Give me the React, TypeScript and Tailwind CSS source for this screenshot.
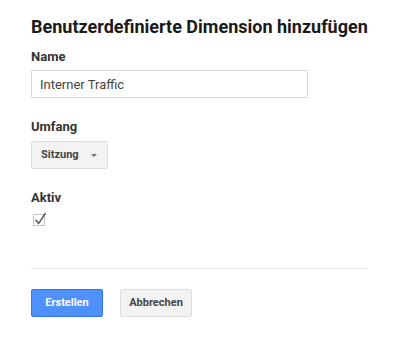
import React, { useState } from 'react';

export default function App() {
  const [name, setName] = useState('Interner Traffic');
  const [active, setActive] = useState(true);

  return (
    <div className="min-h-screen bg-white pl-[31px] pr-[27px] pt-[15px] text-[#222]" style={{ fontFamily: 'Roboto, Arial, sans-serif' }}>
      <h1 className="text-[18px] font-bold leading-[24px] text-[#1a1a1a]">Benutzerdefinierte Dimension hinzufügen</h1>

      <div className="mt-[10px]">
        <label className="block text-[13px] font-bold leading-[16px] text-[#333]">Name</label>
        <input
          value={name}
          onChange={(e) => setName(e.target.value)}
          className="mt-[5px] block h-[28px] w-[277px] border border-[#d9d9d9] px-[8px] text-[13px] text-[#444] outline-none"
        />
      </div>

      <div className="mt-[21px]">
        <label className="block text-[13px] font-bold leading-[16px] text-[#333]">Umfang</label>
        <button className="mt-[6px] flex h-[28px] w-[77px] items-center justify-between rounded-[2px] border border-[#dcdcdc] bg-[#f3f3f3] pl-[9px] pr-[10px] text-[11px] font-bold text-[#444]">
          <span>Sitzung</span>
          <span className="h-0 w-0 border-x-[3px] border-t-[3px] border-x-transparent border-t-[#777]" />
        </button>
      </div>

      <div className="mt-[21px]">
        <label className="block text-[13px] font-bold leading-[16px] text-[#333]">Aktiv</label>
        <button
          onClick={() => setActive(!active)}
          className="relative mt-[8px] ml-[2px] block h-[12px] w-[12px] border border-[#c4c4c4] bg-white"
        >
          {active && (
            <svg width="15" height="14" viewBox="0 0 15 14" className="absolute left-[-1px] top-[-4px]">
              <path d="M2.3 8.7 L5.7 12.3 L12.6 2" fill="none" stroke="#5a5a5a" strokeWidth="1.5" />
            </svg>
          )}
        </button>
      </div>

      <div className="mt-[42px] h-px w-[337px] bg-[#e5e5e5]" />

      <div className="mt-[20px] flex gap-[17px]">
        <button className="h-[28px] w-[72px] rounded-[2px] border border-[#3079ed] bg-[#4d90fe] text-[11px] font-bold text-white">
          Erstellen
        </button>
        <button className="h-[28px] w-[72px] rounded-[2px] border border-[#dcdcdc] bg-[#f3f3f3] text-[11px] font-bold text-[#444]">
          Abbrechen
        </button>
      </div>
    </div>
  );
}
